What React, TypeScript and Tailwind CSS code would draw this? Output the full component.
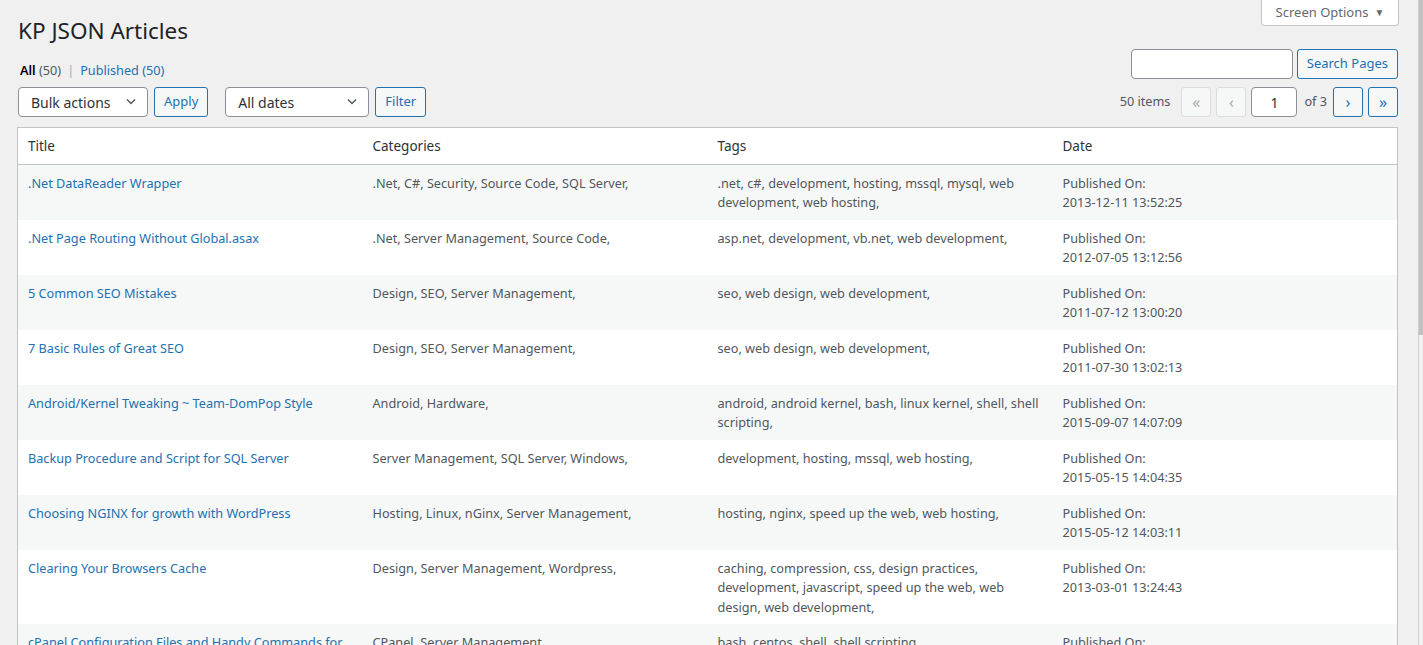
import React from 'react';

type Row = {
  title: string;
  cats: string;
  tags: string;
  date: string;
};

const rows: Row[] = [
  {
    title: '.Net DataReader Wrapper',
    cats: '.Net, C#, Security, Source Code, SQL Server,',
    tags: '.net, c#, development, hosting, mssql, mysql, web development, web hosting,',
    date: '2013-12-11 13:52:25',
  },
  {
    title: '.Net Page Routing Without Global.asax',
    cats: '.Net, Server Management, Source Code,',
    tags: 'asp.net, development, vb.net, web development,',
    date: '2012-07-05 13:12:56',
  },
  {
    title: '5 Common SEO Mistakes',
    cats: 'Design, SEO, Server Management,',
    tags: 'seo, web design, web development,',
    date: '2011-07-12 13:00:20',
  },
  {
    title: '7 Basic Rules of Great SEO',
    cats: 'Design, SEO, Server Management,',
    tags: 'seo, web design, web development,',
    date: '2011-07-30 13:02:13',
  },
  {
    title: 'Android/Kernel Tweaking ~ Team-DomPop Style',
    cats: 'Android, Hardware,',
    tags: 'android, android kernel, bash, linux kernel, shell, shell scripting,',
    date: '2015-09-07 14:07:09',
  },
  {
    title: 'Backup Procedure and Script for SQL Server',
    cats: 'Server Management, SQL Server, Windows,',
    tags: 'development, hosting, mssql, web hosting,',
    date: '2015-05-15 14:04:35',
  },
  {
    title: 'Choosing NGINX for growth with WordPress',
    cats: 'Hosting, Linux, nGinx, Server Management,',
    tags: 'hosting, nginx, speed up the web, web hosting,',
    date: '2015-05-12 14:03:11',
  },
  {
    title: 'Clearing Your Browsers Cache',
    cats: 'Design, Server Management, Wordpress,',
    tags: 'caching, compression, css, design practices, development, javascript, speed up the web, web design, web development,',
    date: '2013-03-01 13:24:43',
  },
  {
    title: 'cPanel Configuration Files and Handy Commands for CentOS',
    cats: 'CPanel, Server Management,',
    tags: 'bash, centos, shell, shell scripting,',
    date: '2014-02-18 12:41:07',
  },
];

const Chevron = () => (
  <svg width="16" height="16" viewBox="0 0 20 20" className="text-[#50575e]">
    <path d="M5 7l5 5 5-5" fill="none" stroke="currentColor" strokeWidth="1.8" />
  </svg>
);

function Select({ label, width }: { label: string; width: string }) {
  return (
    <div
      className={`${width} h-[30px] flex items-center justify-between pl-[12px] pr-[8px] bg-white border border-[#8c8f94] rounded-[4px] text-[#2c3338] text-[14px]`}
    >
      <span>{label}</span>
      <Chevron />
    </div>
  );
}

function Btn({ text }: { text: string }) {
  return (
    <div className="h-[30px] px-[9px] flex items-center border border-[#2271b1] rounded-[3px] bg-[#f6f7f7] text-[#2271b1] text-[13px]">
      {text}
    </div>
  );
}

function PageBtn({ text, disabled }: { text: string; disabled?: boolean }) {
  return (
    <div
      className={
        disabled
          ? 'w-[30px] h-[30px] flex items-center justify-center border border-[#dcdcde] rounded-[3px] bg-[#f6f7f7] text-[#a7aaad] text-[16px]'
          : 'w-[30px] h-[30px] flex items-center justify-center border border-[#2271b1] rounded-[3px] bg-[#f6f7f7] text-[#2271b1] text-[16px]'
      }
    >
      {text}
    </div>
  );
}

export default function App() {
  return (
    <div
      className="h-[645px] overflow-hidden flex bg-[#f0f0f1] text-[12.7px] text-[#3c434a]"
      style={{ fontFamily: '"Noto Sans", "Open Sans", sans-serif' }}
    >
      <div className="flex-1 pl-[17px] pr-[20px] flex flex-col">
        {/* header */}
        <div className="h-[45px] flex justify-between items-start">
          <h1 className="pt-[16px] pl-[1px] text-[22.5px] leading-[30px] text-[#1d2327]">KP JSON Articles</h1>
          <div className="w-[138px] h-[26px] -mr-[1px] flex items-center justify-center gap-[6px] bg-white border border-t-0 border-[#c3c4c7] rounded-b-[4px] text-[#646970] text-[13px]">
            <span>Screen Options</span>
            <span className="text-[10px]">▼</span>
          </div>
        </div>

        {/* views + search */}
        <div className="mt-[4px] h-[31px] flex justify-between items-start">
          <div className="mt-[12px] pl-[3px] leading-[18px] text-[#50575e] flex items-center gap-[6px]">
            <span>
              <span className="text-black font-semibold">All</span> (50)
            </span>
            <span className="text-[#a7aaad]">|</span>
            <span>
              <span className="text-[#2271b1]">Published</span>{' '}
              <span className="text-[#2271b1]">(50)</span>
            </span>
          </div>
          <div className="flex items-center gap-[4px]">
            <div className="w-[162px] h-[30px] bg-white border border-[#8c8f94] rounded-[4px]" />
            <Btn text="Search Pages" />
          </div>
        </div>

        {/* tablenav */}
        <div className="h-[30px] flex justify-between items-center mt-[8px] pl-[1px]">
          <div className="flex items-center">
            <Select label="Bulk actions" width="w-[130px]" />
            <div className="ml-[6px]">
              <Btn text="Apply" />
            </div>
            <div className="ml-[17px]">
              <Select label="All dates" width="w-[144px]" />
            </div>
            <div className="ml-[6px]">
              <Btn text="Filter" />
            </div>
          </div>
          <div className="flex items-center gap-[5px] text-[#50575e]">
            <span className="mr-[6px]">50 items</span>
            <PageBtn text="«" disabled />
            <PageBtn text="‹" disabled />
            <div className="w-[46px] h-[30px] flex items-center justify-center bg-white border border-[#8c8f94] rounded-[4px] text-[#2c3338] text-[14px]">
              1
            </div>
            <span className="ml-[2px] mr-[1px]">of 3</span>
            <PageBtn text="›" />
            <PageBtn text="»" />
          </div>
        </div>

        {/* table */}
        <table className="mt-[10px] w-full table-fixed bg-white border border-[#c3c4c7] shadow-[0_1px_1px_rgba(0,0,0,0.04)] border-collapse">
          <thead>
            <tr className="border-b border-[#c3c4c7]">
              {['Title', 'Categories', 'Tags', 'Date'].map((h) => (
                <th
                  key={h}
                  className="text-left font-normal text-[#2c3338] text-[13.5px] leading-[19.5px] px-[10px] pt-[9px] pb-[7px]"
                >
                  {h}
                </th>
              ))}
            </tr>
          </thead>
          <tbody>
            {rows.map((r, i) => (
              <tr key={r.title} className={i % 2 === 0 ? 'bg-[#f6f7f7]' : 'bg-white'}>
                <td className="align-top px-[10px] pt-[9px] pb-[7px] leading-[19.5px] text-[#2271b1]">{r.title}</td>
                <td className="align-top px-[10px] pt-[9px] pb-[7px] leading-[19.5px] text-[#50575e]">{r.cats}</td>
                <td className="align-top px-[10px] pt-[9px] pb-[7px] leading-[19.5px] text-[#50575e]">{r.tags}</td>
                <td className="align-top px-[10px] pt-[9px] pb-[7px] leading-[19.5px] text-[#50575e]">
                  Published On:
                  <br />
                  {r.date}
                </td>
              </tr>
            ))}
          </tbody>
        </table>
      </div>

      {/* scrollbar */}
      <div className="w-[5px] flex flex-col border-l border-[#d0d0d0]">
        <div className="h-[335px] bg-[#c1c1c1]" />
        <div className="flex-1 bg-[#f1f1f1]" />
      </div>
    </div>
  );
}
